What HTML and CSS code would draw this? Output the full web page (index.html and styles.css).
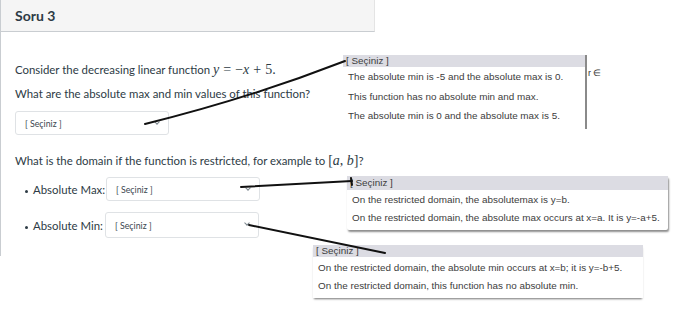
FILE: index.html
```html
<!DOCTYPE html>
<html lang="tr">
<head>
<meta charset="utf-8">
<title>Soru 3</title>
<link rel="stylesheet" href="styles.css">
</head>
<body>
<div class="page">
  <section class="quiz">
    <header class="quiz-head">Soru 3</header>
    <div class="quiz-body">
      <p class="line">Consider the decreasing linear function <span class="math">y</span><span class="mop">=</span><span class="mun">&minus;</span><span class="math">x</span><span class="mop">+</span><span class="mnum">5.</span></p>
      <p class="line second">What are the absolute max and min values of this function?</p>
      <div class="select wide"><span>[ Seçiniz ]</span><span class="chev"></span></div>
      <p class="line domain">What is the domain if the function is restricted, for example to <span class="mnum">[</span><span class="math">a</span><span class="mnum">, </span><span class="math">b</span><span class="mnum">]</span>?</p>
      <ul class="opts">
        <li><span class="lbl">Absolute Max:</span><div class="select"><span>[ Seçiniz ]</span><span class="chev"></span></div></li>
        <li><span class="lbl">Absolute Min:</span><div class="select"><span>[ Seçiniz ]</span><span class="chev"></span></div></li>
      </ul>
    </div>
  </section>

  <div class="dd dd1">
    <div class="dd-head">[ Seçiniz ]</div>
    <div class="dd-item">The absolute min is -5 and the absolute max is 0.</div>
    <div class="dd-item">This function has no absolute min and max.</div>
    <div class="dd-item">The absolute min is 0 and the absolute max is 5.</div>
  </div>
  <span class="stray">r &isin;</span>

  <div class="dd dd2">
    <div class="dd-head">[ Seçiniz ]</div>
    <div class="dd-item">On the restricted domain, the absolutemax is y=b.</div>
    <div class="dd-item">On the restricted domain, the absolute max occurs at x=a. It is y=-a+5.</div>
  </div>

  <div class="dd dd3">
    <div class="dd-head">[ Seçiniz ]</div>
    <div class="dd-item">On the restricted domain, the absolute min occurs at x=b; it is y=-b+5.</div>
    <div class="dd-item">On the restricted domain, this function has no absolute min.</div>
  </div>

  <svg class="ink" width="700" height="322" viewBox="0 0 700 322" aria-hidden="true">
    <path d="M145 124 Q250 98 345 61" />
    <path d="M241 187 L352 181" />
    <path d="M351 178 L352 185" stroke-width="1.2"/>
    <path d="M249 225 L385 253" />
  </svg>
</div>
</body>
</html>
```
FILE: styles.css
```css
* { box-sizing: border-box; }
html, body { margin: 0; padding: 0; background: #fff; }
body { width: 700px; height: 322px; overflow: hidden; }
.page { position: relative; width: 700px; height: 322px; font-family: Lato, "Open Sans", sans-serif; color: #2d3b45; }

.quiz { width: 375px; border-left: 1px solid #c9cdd1; height: 256px; }
.quiz-head {
  height: 32px; background: #f5f5f5; border-bottom: 1px solid #c9cdd1;
  padding-left: 14px; font-weight: 700; font-size: 14px; line-height: 31px; color: #2d3b45;
  border-right: 1px solid #e4e4e4;
}
.quiz-body { padding: 29px 0 0 14px; }
.line { margin: 0; font-size: 11.4px; line-height: 18px; white-space: nowrap; }
.second { margin-top: 6px; }
.math { font-family: "Liberation Serif", "DejaVu Serif", serif; font-style: italic; font-size: 14px; }
.mop, .mun, .mnum { font-family: "Liberation Serif", "DejaVu Serif", serif; font-size: 14px; }
.mop { margin: 0 4px; }

.select {
  position: relative; display: flex; align-items: center;
  width: 154px; height: 24px; border: 1px solid #dfe2e5; border-radius: 3px; background: #fff;
  font-size: 8.8px; color: #3a4750; padding-left: 9px;
}
.select.wide { margin-top: 8px; }
.chev {
  position: absolute; right: 9px; top: 8px; width: 4px; height: 4px;
  border-right: 1px solid #7a858c; border-bottom: 1px solid #7a858c; transform: rotate(45deg);
}
.domain { margin-top: 17px; }

.opts { list-style: none; margin: 7px 0 0; padding: 0 0 0 10px; }
.opts li { display: flex; align-items: center; font-size: 11.4px; height: 24px; white-space: nowrap; }
.opts li + li { margin-top: 11px; height: 26px; }
.opts li + li .select { height: 26px; }
.lbl { position: relative; padding-left: 8px; width: 81px; }
.opts li + li .lbl { width: 80px; }
.lbl::before { content: ""; position: absolute; left: 0; top: 7px; width: 3px; height: 3px; border-radius: 50%; background: #2d3b45; }

.dd {
  position: absolute; background: #fff; font-family: "Liberation Sans", Arial, sans-serif; font-size: 9.9px; color: #3c3c3c;
}
.dd-head { background: #dcdce3; padding-left: 3px; }
.dd-item { padding-left: 5px; }

.dd1 { left: 343px; top: 55px; width: 244px; height: 74px; border-right: 2px solid #8a8a8a; }
.dd1 .dd-head { height: 12px; line-height: 12px; }
.dd1 .dd-item { height: 19.5px; line-height: 20px; }
.dd1 .dd-item:first-of-type { margin-top: 2px; }

.stray { position: absolute; left: 588px; top: 68px; font-family: "Liberation Sans", Arial, sans-serif; font-size: 9px; color: #333; }

.dd2 { left: 347px; top: 176px; width: 321px; height: 54px; box-shadow: 1px 2px 2px rgba(0,0,0,0.45); border-radius: 2px; }
.dd2 .dd-head { height: 14px; line-height: 14px; }
.dd2 .dd-item { height: 18px; line-height: 20px; }

.dd3 { left: 313px; top: 245px; width: 330px; height: 53px; box-shadow: 0 2px 2px -1px rgba(0,0,0,0.55); }
.dd3 .dd-head { height: 12px; line-height: 12px; }
.dd3 .dd-item { height: 17.5px; line-height: 21px; }

.ink { position: absolute; left: 0; top: 0; pointer-events: none; }
.ink path { stroke: #111; stroke-width: 2; fill: none; stroke-linecap: round; }
```
